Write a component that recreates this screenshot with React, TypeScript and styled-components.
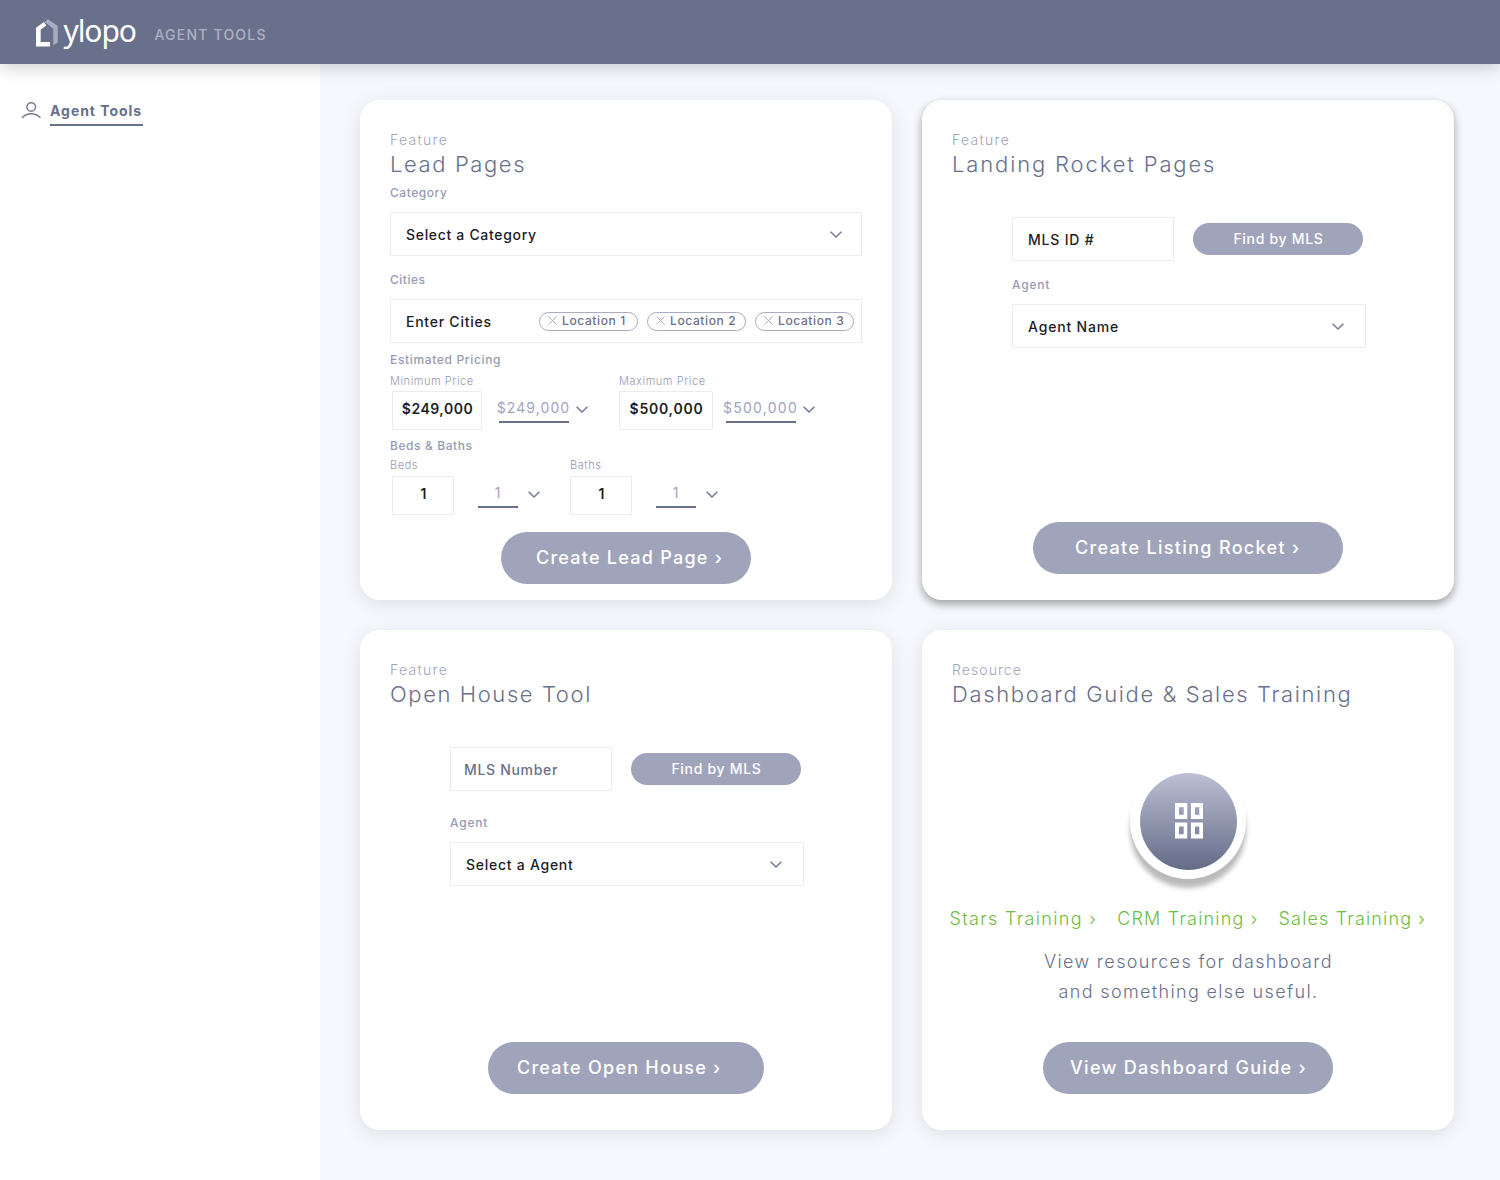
import React from "react";
import styled, { createGlobalStyle } from "styled-components";

const color = {
  slate: "#69708b",
  lilac: "#a0a4bb",
  mist: "#f6f8fd",
  ink: "#1d1d1f",
  line: "#ececec",
  green: "#6fbb45",
};

const GlobalStyle = createGlobalStyle`
  * { box-sizing: border-box; }
  body {
    margin: 0;
    font-family: Inter, "Liberation Sans", sans-serif;
    background: ${color.mist};
  }
  button, h2, p { margin: 0; padding: 0; border: 0; font: inherit; }
`;

type Spaced = { $ls: number };

const Page = styled.div`
  display: flex;
  flex-direction: column;
  width: 1500px;
  height: 1180px;
  overflow: hidden;
`;

const TopBar = styled.header`
  display: flex;
  align-items: flex-start;
  flex: none;
  height: 64px;
  padding-left: 36px;
  background: ${color.slate};
  box-shadow: 0 4px 16px rgba(0, 0, 0, 0.18);
  z-index: 1;
`;

const LogoMark = styled.svg`
  flex: none;
  width: 22px;
  height: 28px;
  margin-top: 19px;
`;

const Wordmark = styled.span`
  width: 73px;
  margin: 10px 0 0 5.5px;
  font: 400 30px/42px "Noto Sans", "Open Sans", sans-serif;
  letter-spacing: -1.1px;
  color: #fff;
`;

const Product = styled.span`
  margin: 25px 0 0 18px;
  font-size: 14px;
  font-weight: 500;
  line-height: 20px;
  letter-spacing: 1.2px;
  color: #adb1c4;
`;

const Body = styled.div`
  display: flex;
  flex: 1;
`;

const Sidebar = styled.nav`
  width: 320px;
  padding: 36px 0 0 21px;
  background: #fff;
`;

const NavItem = styled.a`
  display: flex;
  align-items: flex-start;
  color: ${color.slate};
`;

const UserIcon = styled.svg`
  width: 20px;
  height: 18px;
  margin-top: 1px;
`;

const NavLabel = styled.span`
  width: 93px;
  height: 26px;
  margin-left: 9px;
  border-bottom: 2px solid ${color.slate};
  font-size: 14px;
  font-weight: 700;
  line-height: 22px;
  letter-spacing: 0.96px;
  white-space: nowrap;
`;

const Main = styled.main`
  display: grid;
  grid-template-columns: 532px 532px;
  grid-template-rows: 500px 500px;
  gap: 30px;
  padding: 36px 40px;
`;

const CardBox = styled.section<{ $raised?: boolean; $bottom: number }>`
  display: flex;
  flex-direction: column;
  padding: 30px 30px ${(p) => p.$bottom}px;
  border-radius: 20px;
  background: #fff;
  box-shadow: ${(p) =>
    p.$raised ? "0 4px 10px rgba(0, 0, 0, 0.36)" : "0 4px 20px rgba(0, 0, 0, 0.1)"};
`;

const Eyebrow = styled.p<Spaced>`
  font-size: 14px;
  font-weight: 300;
  line-height: 20px;
  letter-spacing: ${(p) => p.$ls}px;
  color: ${color.lilac};
`;

const Title = styled.h2<Spaced>`
  font-size: 22px;
  font-weight: 300;
  line-height: 29px;
  letter-spacing: ${(p) => p.$ls}px;
  white-space: nowrap;
  color: ${color.slate};
`;

const Label = styled.p<Spaced & { $top: number }>`
  margin-top: ${(p) => p.$top}px;
  font-size: 12px;
  font-weight: 500;
  line-height: 16px;
  letter-spacing: ${(p) => p.$ls}px;
  color: #969bb3;
`;

const SubLabel = styled.p`
  font-size: 11px;
  font-weight: 300;
  line-height: 13px;
  letter-spacing: 0.57px;
  white-space: nowrap;
  color: #959ab2;
`;

const Field = styled.div<Spaced & { $width: number; $muted?: boolean }>`
  display: flex;
  align-items: center;
  width: ${(p) => p.$width}px;
  height: 44px;
  padding-left: ${(p) => (p.$muted ? 13 : 15)}px;
  border: 1px solid ${color.line};
  border-radius: 1px;
  background: #fff;
  font-size: 14px;
  font-weight: 500;
  letter-spacing: ${(p) => p.$ls}px;
  color: ${(p) => (p.$muted ? color.slate : color.ink)};
`;

const SelectField = styled(Field)`
  justify-content: space-between;
  margin-top: 11px;
  padding-right: ${(p) => (p.$width > 400 ? 19 : 21)}px;
`;

const FieldText = styled.span`
  padding-top: 2px;
  line-height: 18px;
  white-space: nowrap;
`;

const ChevronSvg = styled.svg`
  flex: none;
  width: 12px;
  height: 7px;
`;

const Chips = styled.div`
  display: flex;
  gap: 9px;
  margin-right: -12px;
`;

const Chip = styled.span`
  display: flex;
  align-items: center;
  gap: 5px;
  width: 99px;
  height: 19px;
  padding: 0 0 1px 8px;
  border: 1.5px solid #a9adc2;
  border-radius: 10px;
  font-size: 12px;
  letter-spacing: 0.62px;
  white-space: nowrap;
  color: ${color.slate};
`;

const CrossSvg = styled.svg`
  flex: none;
  width: 9px;
  height: 9px;
`;

const Ranges = styled.div<{ $top: number; $column: number }>`
  display: grid;
  grid-template-columns: ${(p) => p.$column}px auto;
  margin-top: ${(p) => p.$top}px;
`;

const Range = styled.div<{ $gap: number; $indent: number }>`
  display: flex;
  flex-direction: column;
  gap: ${(p) => p.$gap}px;

  > div {
    margin-left: ${(p) => p.$indent}px;
  }
`;

const RangeRow = styled.div`
  display: flex;
  height: 39px;
`;

const ValueBox = styled.div<Spaced & { $width: number }>`
  display: flex;
  align-items: center;
  justify-content: center;
  width: ${(p) => p.$width}px;
  padding: 0 0 4px 1px;
  border: 1px solid ${color.line};
  border-radius: 1px;
  font-size: 14px;
  font-weight: 600;
  letter-spacing: ${(p) => p.$ls}px;
  color: ${color.ink};
`;

const GhostValue = styled.div<Spaced & { $width: number; $left: number }>`
  display: flex;
  justify-content: center;
  width: ${(p) => p.$width}px;
  height: 32px;
  margin-left: ${(p) => p.$left}px;
  padding: 4px 1px 0 0;
  border-bottom: 2px solid ${color.slate};
  font-size: 14px;
  font-weight: 400;
  line-height: 26px;
  letter-spacing: ${(p) => p.$ls}px;
  color: ${color.lilac};
`;

const RangeChevron = styled.span<{ $left: number }>`
  display: flex;
  margin: 15px 0 0 ${(p) => p.$left}px;
`;

const PrimaryButton = styled.button<Spaced & { $width: number; $inset: number }>`
  flex: none;
  align-self: center;
  width: ${(p) => p.$width}px;
  height: 52px;
  margin-top: auto;
  padding: 0 0 2px ${(p) => p.$inset}px;
  border-radius: 26px;
  background: ${color.lilac};
  font-size: 18px;
  font-weight: 500;
  letter-spacing: ${(p) => p.$ls}px;
  text-align: left;
  white-space: nowrap;
  color: #fff;
`;

const FindButton = styled.button`
  width: 170px;
  height: 32px;
  padding: 0 0 1px 1px;
  border-radius: 16px;
  background: ${color.lilac};
  font-size: 14px;
  font-weight: 500;
  letter-spacing: 0.7px;
  color: #fff;
`;

const Lookup = styled.div`
  margin: 38px 0 0 60px;
`;

const LookupRow = styled.div`
  display: flex;
  align-items: center;
  gap: 19px;
`;

const Badge = styled.div`
  display: flex;
  align-items: center;
  justify-content: center;
  align-self: center;
  flex: none;
  width: 116px;
  height: 116px;
  margin-top: 54px;
  border-radius: 50%;
  background: #fff;
  box-shadow: 0 9px 5px rgba(0, 0, 0, 0.27);
`;

const BadgeDisc = styled.div`
  display: flex;
  align-items: center;
  justify-content: center;
  width: 97px;
  height: 97px;
  padding-left: 1px;
  border-radius: 50%;
  background: linear-gradient(#bdc0d4, #646b88);
`;

const LinkRow = styled.div`
  display: flex;
  gap: 20px;
  margin: 30px 0 0 -2.5px;
`;

const TrainingLink = styled.a<Spaced>`
  font-size: 18px;
  font-weight: 300;
  line-height: 20px;
  letter-spacing: ${(p) => p.$ls}px;
  white-space: nowrap;
  color: ${color.green};
`;

const Copy = styled.p`
  margin-top: 18px;
  padding-left: 1px;
  font-size: 18px;
  font-weight: 300;
  line-height: 30px;
  letter-spacing: 1.34px;
  text-align: center;
  color: ${color.slate};
`;

const Chevron = () => (
  <ChevronSvg viewBox="0 0 12 7" fill="none">
    <path d="M.6.7 6 6 11.4.7" stroke="#747b96" strokeWidth="1.5" />
  </ChevronSvg>
);

const Cross = () => (
  <CrossSvg viewBox="0 0 9 9" fill="none">
    <path d="M.5.5l8 8M8.500.5l-8 8" stroke="#a3a7bd" strokeWidth="0.9" />
  </CrossSvg>
);

type RangeFieldProps = {
  label: string;
  value: string;
  gap: number;
  indent: number;
  boxWidth: number;
  boxLs?: number;
  ghostWidth: number;
  ghostLeft: number;
  ghostLs?: number;
  chevronLeft: number;
};

const RangeField = (p: RangeFieldProps) => (
  <Range $gap={p.gap} $indent={p.indent}>
    <SubLabel>{p.label}</SubLabel>
    <RangeRow>
      <ValueBox $width={p.boxWidth} $ls={p.boxLs ?? 0}>{p.value}</ValueBox>
      <GhostValue $width={p.ghostWidth} $left={p.ghostLeft} $ls={p.ghostLs ?? 0}>
        {p.value}
      </GhostValue>
      <RangeChevron $left={p.chevronLeft}>
        <Chevron />
      </RangeChevron>
    </RangeRow>
  </Range>
);

const LeadPages = () => (
  <CardBox $bottom={16}>
    <Eyebrow $ls={1.3}>Feature</Eyebrow>
    <Title $ls={1.6}>Lead Pages</Title>
    <Label $top={6} $ls={0.55}>Category</Label>
    <SelectField $width={472} $ls={0.68}>
      <FieldText>Select a Category</FieldText>
      <Chevron />
    </SelectField>
    <Label $top={16} $ls={0.5}>Cities</Label>
    <SelectField $width={472} $ls={0.75}>
      <FieldText>Enter Cities</FieldText>
      <Chips>
        {["Location 1", "Location 2", "Location 3"].map((name) => (
          <Chip key={name}>
            <Cross />
            {name}
          </Chip>
        ))}
      </Chips>
    </SelectField>
    <Label $top={9} $ls={0.65}>Estimated Pricing</Label>
    <Ranges $top={7} $column={229}>
      <RangeField label="Minimum Price" value="$249,000" gap={3} indent={2} boxWidth={90} boxLs={0.5}
        ghostWidth={70} ghostLeft={17} ghostLs={1.08} chevronLeft={7} />
      <RangeField label="Maximum Price" value="$500,000" gap={3} indent={0} boxWidth={94} boxLs={0.75}
        ghostWidth={70} ghostLeft={13} ghostLs={1.25} chevronLeft={7} />
    </Ranges>
    <Label $top={8} $ls={0.59}>Beds &amp; Baths</Label>
    <Ranges $top={5} $column={180}>
      <RangeField label="Beds" value="1" gap={4} indent={2} boxWidth={62}
        ghostWidth={40} ghostLeft={24} chevronLeft={10} />
      <RangeField label="Baths" value="1" gap={4} indent={0} boxWidth={62}
        ghostWidth={40} ghostLeft={24} chevronLeft={10} />
    </Ranges>
    <PrimaryButton $width={250} $inset={35} $ls={1.25}>Create Lead Page ›</PrimaryButton>
  </CardBox>
);

const ListingRocket = () => (
  <CardBox $raised $bottom={26}>
    <Eyebrow $ls={1.3}>Feature</Eyebrow>
    <Title $ls={1.86}>Landing Rocket Pages</Title>
    <Lookup>
      <LookupRow>
        <Field $width={162} $ls={0.8}><FieldText>MLS ID #</FieldText></Field>
        <FindButton>Find by MLS</FindButton>
      </LookupRow>
      <Label $top={16} $ls={0.8}>Agent</Label>
      <SelectField $width={354} $ls={0.83}>
        <FieldText>Agent Name</FieldText>
        <Chevron />
      </SelectField>
    </Lookup>
    <PrimaryButton $width={310} $inset={42} $ls={1.33}>Create Listing Rocket ›</PrimaryButton>
  </CardBox>
);

const OpenHouse = () => (
  <CardBox $bottom={36}>
    <Eyebrow $ls={1.3}>Feature</Eyebrow>
    <Title $ls={1.6}>Open House Tool</Title>
    <Lookup>
      <LookupRow>
        <Field $width={162} $ls={0.69} $muted><FieldText>MLS Number</FieldText></Field>
        <FindButton>Find by MLS</FindButton>
      </LookupRow>
      <Label $top={24} $ls={0.8}>Agent</Label>
      <SelectField $width={354} $ls={0.74}>
        <FieldText>Select a Agent</FieldText>
        <Chevron />
      </SelectField>
    </Lookup>
    <PrimaryButton $width={276} $inset={29} $ls={1.26}>Create Open House ›</PrimaryButton>
  </CardBox>
);

const Resources = () => (
  <CardBox $bottom={36}>
    <Eyebrow $ls={1.08}>Resource</Eyebrow>
    <Title $ls={1.64}>Dashboard Guide &amp; Sales Training</Title>
    <Badge>
      <BadgeDisc>
        <svg width="28" height="36" viewBox="0 0 28 36" fill="#fff" fillRule="evenodd">
          <path d="M0 0h12.300v16H0zM4 4.200v7.600h4.700V4.200z" />
          <path d="M15.900 0H28v16H15.900zM20 4.200v7.600h4.300V4.200z" />
          <path d="M0 19.400h12.300v16.200H0zM4 23.600v7.600h4.700v-7.600z" />
          <path d="M15.900 19.400H28v16.200H15.900zM20 23.600v7.600h4.300v-7.600z" />
        </svg>
      </BadgeDisc>
    </Badge>
    <LinkRow>
      <TrainingLink $ls={1.33}>Stars Training ›</TrainingLink>
      <TrainingLink $ls={1.2}>CRM Training ›</TrainingLink>
      <TrainingLink $ls={1.15}>Sales Training ›</TrainingLink>
    </LinkRow>
    <Copy>
      View resources for dashboard
      <br />
      and something else useful.
    </Copy>
    <PrimaryButton $width={290} $inset={27} $ls={1.3}>View Dashboard Guide ›</PrimaryButton>
  </CardBox>
);

export default function App() {
  return (
    <Page>
      <GlobalStyle />
      <TopBar>
        <LogoMark viewBox="0 0 22 28">
          <path fill="#a9adc2" d="M9.300 2.300 12 .3l9.700 6.700v16.500l-4.400 3V9.800l-8-6.200z" />
          <path fill="#fff" d="M0 27.500h14V23H4.700V10.500L10.300 6.500 8 3 0 8.700z" />
        </LogoMark>
        <Wordmark>ylopo</Wordmark>
        <Product>AGENT TOOLS</Product>
      </TopBar>
      <Body>
        <Sidebar>
          <NavItem>
            <UserIcon viewBox="0 0 20 18" fill="none" stroke="#757c97" strokeWidth="1.500">
              <circle cx="10.200" cy="6" r="4.300" />
              <path d="M1 16.800c2.400-2.700 5.600-4.100 9.200-4.100s6.800 1.400 9.200 4.100" />
            </UserIcon>
            <NavLabel>Agent Tools</NavLabel>
          </NavItem>
        </Sidebar>
        <Main>
          <LeadPages />
          <ListingRocket />
          <OpenHouse />
          <Resources />
        </Main>
      </Body>
    </Page>
  );
}
